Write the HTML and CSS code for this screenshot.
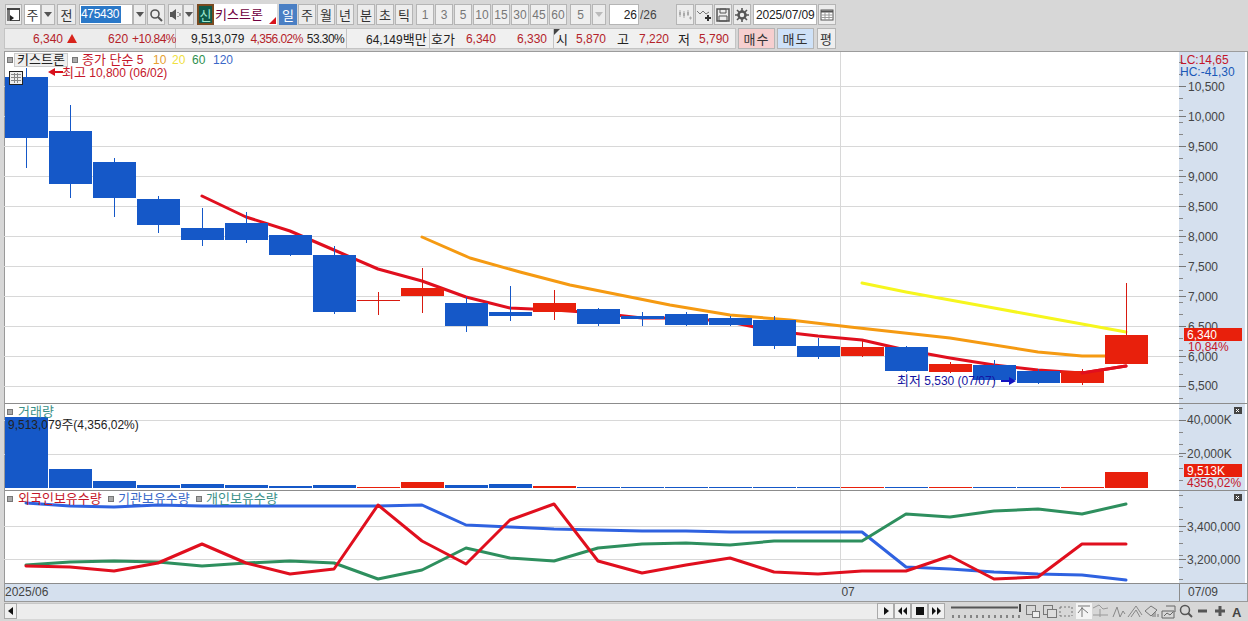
FILE: index.html
```html
<!DOCTYPE html>
<html lang="ko">
<head>
<meta charset="utf-8">
<title>키스트론 차트</title>
<link rel="stylesheet" href="styles.css">
</head>
<body>
<div class="toolbar">
  <button class="btn w17"><svg width="15" height="15" viewBox="0 0 15 15"><rect x="1.500" y="1.500" width="12" height="12" fill="#fff" stroke="#444"/><rect x="1" y="1" width="13" height="2" fill="#444"/><rect x="1" y="3" width="3" height="11" fill="#777"/><path d="M4 8l4 3-4 3z" fill="#222"/></svg></button>
  <button class="btn w17 m2 white">주</button>
  <button class="btn w14 caret"><i></i></button>
  <button class="btn w19 m2">전</button>
  <div class="field w54 m3"><span class="sel">475430</span></div>
  <button class="btn w13 caret"><i></i></button>
  <button class="btn w18 m1"><svg width="14" height="14" viewBox="0 0 14 14"><circle cx="6" cy="6" r="4" fill="none" stroke="#555" stroke-width="1.600"/><path d="M9 9l4 4" stroke="#555" stroke-width="2"/></svg></button>
  <button class="btn w15 m3"><svg width="13" height="13" viewBox="0 0 13 13"><path d="M1 4h2l4-3v11l-4-3H1z" fill="#555"/><path d="M9 4v1M9 8v1M11 5v3" stroke="#555"/></svg></button>
  <button class="btn w11 caret"><i></i></button>
  <div class="sin m3">신</div>
  <div class="name w63">키스트론<b></b></div>
  <button class="btn w18 m2 on">일</button>
  <button class="btn w18 m1">주</button>
  <button class="btn w18 m1">월</button>
  <button class="btn w18 m1">년</button>
  <button class="btn w18 m3">분</button>
  <button class="btn w18 m1">초</button>
  <button class="btn w18 m1">틱</button>
  <button class="btn w18 m3 dim">1</button>
  <button class="btn w18 m1 dim">3</button>
  <button class="btn w18 m1 dim">5</button>
  <button class="btn w18 m1 dim">10</button>
  <button class="btn w18 m1 dim">15</button>
  <button class="btn w18 m1 dim">30</button>
  <button class="btn w18 m1 dim">45</button>
  <button class="btn w18 m1 dim">60</button>
  <button class="btn w21 m3 dim">5</button>
  <button class="btn w14 m1 caret faded"><i></i></button>
  <div class="field w30 m3 right">26</div>
  <div class="plain w20">/26</div>
  <button class="btn w18 m16"><svg width="16" height="14" viewBox="0 0 16 14"><path d="M3 2v7M7 3v7M11 2v6" stroke="#aaa"/><path d="M2 4h2v3H2zM6 5h2v3H6zM10 4h2v3h-2z" fill="#aaa"/><path d="M12 10h3M13.500 8.500v3" stroke="#aaa"/></svg></button>
  <button class="btn w18 m1"><svg width="16" height="14" viewBox="0 0 16 14"><path d="M1 3l3 3 3-3 3 3 3-2" fill="none" stroke="#777"/><path d="M9 10h6M12 7v6" stroke="#333" stroke-width="2"/></svg></button>
  <button class="btn w18 m1"><svg width="14" height="14" viewBox="0 0 14 14"><path d="M1 1h12v12H1z" fill="none" stroke="#555" stroke-width="1.500"/><path d="M4 1h6v4H4zM3 8h8v5H3z" fill="none" stroke="#555"/></svg></button>
  <button class="btn w18 m1"><svg width="14" height="14" viewBox="0 0 14 14"><circle cx="7" cy="7" r="3.500" fill="none" stroke="#555" stroke-width="2.500"/><path d="M7 0v3M7 11v3M0 7h3M11 7h3M2 2l2 2M10 10l2 2M12 2l-2 2M4 10l-2 2" stroke="#555" stroke-width="1.600"/></svg></button>
  <div class="field w64 m2 date">2025/07/09</div>
  <button class="btn w18 m1"><svg width="14" height="12" viewBox="0 0 14 12"><rect x="1" y="1" width="12" height="10" fill="#fff" stroke="#555"/><path d="M1 2.500h12" stroke="#555" stroke-width="2"/><path d="M1 6h12M1 8.500h12M5 3v8M9 3v8" stroke="#999"/></svg></button>
</div>

<div class="quote">
  <div class="cell q1">
    <span class="red x29">6,340</span><b class="up"></b><span class="red x31">620</span><span class="red x4 pct">+10.84%</span>
  </div>
  <div class="cell q2">
    <span class="dark x15">9,513,079</span><span class="red x6 pct">4,356.02%</span><span class="dark x4 pct">53.30%</span>
  </div>
  <div class="cell q3"><span class="dark x19">64,149<span class="kr">백만</span></span></div>
  <div class="cell q4">
    <span class="dark x1 kr">호가</span><span class="red x11">6,340</span><span class="red x21">6,330</span>
  </div>
  <div class="cell q5">
    <b class="flag"></b><span class="dark x2 kr">시</span><span class="red x8">5,870</span><span class="dark x11 kr">고</span><span class="red x10">7,220</span><span class="dark x9 kr">저</span><span class="red x9">5,790</span>
  </div>
  <button class="trade buy">매수</button>
  <button class="trade sell">매도</button>
  <button class="trade even">평</button>
</div>

<div class="chart">
  <div class="pane main">
    <svg class="plot" width="1175" height="351" viewBox="4 52 1175 351">
      <path class="grid" d="M4 86.500H1179M4 116.500H1179M4 146.500H1179M4 176.500H1179M4 206.500H1179M4 236.500H1179M4 266.500H1179M4 296.500H1179M4 326.500H1179M4 356.500H1179M4 386.500H1179M840.500 52V403"/>
      <polyline class="ln ma5" points="202,196 246,217 290,231 334,250 378,269 422,281 466,297 510,308 554,310 598,313 642,318 686,318 730,322 774,331 818,336 862,340 906,350 950,358 994,365 1038,370 1082,373 1126,366"/>
      <polyline class="ln ma20" points="422,237 470,258 520,272 570,285 620,295 670,305 730,315 790,320 850,327 950,338 1038,352 1082,356 1126,356"/>
      <polyline class="ln ma60" points="862,283 906,292 950,300 994,308 1038,316 1082,324 1126,332"/>
      <g class="wick-b">
        <path d="M26.500 68V168M70.500 105V198M114.500 158V217M158.500 196V233M202.500 208V246M246.500 212V243M290.500 235V256M334.500 246V314M466.500 297V332M510.500 286V321M598.500 308V326M642.500 312V326M686.500 312V326M730.500 316V326M774.500 316V349M818.500 338V359M906.500 346V372M994.500 360V381M1038.500 369V384"/>
      </g>
      <g class="wick-r">
        <path d="M378.500 292V315M422.500 268V313M554.500 290V320M862.500 340V357M950.500 362V373M1082.500 369V385M1126.500 283V364"/>
        <path d="M357 300.500H400"/>
      </g>
      <g class="bar-b">
        <rect x="5" y="77" width="43" height="61"/><rect x="49" y="131" width="43" height="53"/><rect x="93" y="162" width="43" height="36"/><rect x="137" y="199" width="43" height="26"/><rect x="181" y="228" width="43" height="12"/><rect x="225" y="223" width="43" height="17"/><rect x="269" y="235" width="43" height="20"/><rect x="313" y="255" width="43" height="57"/><rect x="445" y="303" width="43" height="23"/><rect x="489" y="312" width="43" height="4"/><rect x="577" y="309" width="43" height="15"/><rect x="621" y="316" width="43" height="3"/><rect x="665" y="314" width="43" height="11"/><rect x="709" y="318" width="43" height="7"/><rect x="753" y="320" width="43" height="26"/><rect x="797" y="346" width="43" height="11"/><rect x="885" y="347" width="43" height="24"/><rect x="973" y="365" width="43" height="15"/><rect x="1017" y="371" width="43" height="12"/>
      </g>
      <g class="bar-r">
        <rect x="401" y="288" width="43" height="8"/><rect x="533" y="303" width="43" height="9"/><rect x="841" y="347" width="43" height="9"/><rect x="929" y="364" width="43" height="8"/><rect x="1061" y="371" width="43" height="12"/><rect x="1105" y="335" width="43" height="29"/>
      </g>
      <polyline class="ln ma5" points="1082,373 1126,366"/>
      <rect class="mark" x="7.500" y="57.500" width="5" height="5"/>
      <rect class="namebox" x="14.500" y="53.500" width="53" height="13"/>
      <text class="t k ink" x="17" y="64">키스트론</text>
      <rect class="mark" x="72.500" y="57.500" width="5" height="5"/>
      <text class="t red-t" x="82" y="64"><tspan class="k">종가 단순</tspan> 5</text>
      <text class="t orange-t" x="153" y="64">10</text>
      <text class="t yellow-t" x="172" y="64">20</text>
      <text class="t green-t" x="192" y="64">60</text>
      <text class="t blue-t" x="213" y="64">120</text>
      <path class="red-f" d="M48 72l7-4v3h8v2h-8v3z"/>
      <text class="t red-t" x="62" y="77"><tspan class="k">최고</tspan> 10,800 (06/02)</text>
      <rect class="cal" x="9.500" y="71.500" width="13" height="13"/>
      <path class="calg" d="M11 74.500h10M11 77.500h10M11 80.500h10M14.500 73v10M17.500 73v10"/>
      <text class="t navy-t" x="897" y="385"><tspan class="k">최저</tspan> 5,530 (07/07)</text>
      <path class="navy-f" d="M1016 381l-7-4v3h-8v2h8v3z"/>
    </svg>
    <svg class="axis" width="66" height="351" viewBox="1179 52 66 351">
      <rect x="1179" y="52" width="66" height="351" class="axis-bg"/>
      <path class="minor" d="M1181 62V403"/>
      <path class="major" d="M1179 86.500h7M1179 116.500h7M1179 146.500h7M1179 176.500h7M1179 206.500h7M1179 236.500h7M1179 266.500h7M1179 296.500h7M1179 326.500h7M1179 356.500h7M1179 386.500h7"/>
      <text class="t ax" x="1188" y="91">10,500</text>
      <text class="t ax" x="1188" y="121">10,000</text>
      <text class="t ax" x="1188" y="151">9,500</text>
      <text class="t ax" x="1188" y="181">9,000</text>
      <text class="t ax" x="1188" y="211">8,500</text>
      <text class="t ax" x="1188" y="241">8,000</text>
      <text class="t ax" x="1188" y="271">7,500</text>
      <text class="t ax" x="1188" y="301">7,000</text>
      <text class="t ax" x="1188" y="331">6,500</text>
      <text class="t ax" x="1188" y="361">6,000</text>
      <text class="t ax" x="1188" y="390">5,500</text>
      <text class="t red-t" x="1180" y="64">LC:14,65</text>
      <text class="t blue-d" x="1180" y="76">HC:-41,30</text>
      <rect class="bar-r" x="1184" y="328" width="58" height="13"/>
      <text class="t wh" x="1187" y="339">6,340</text>
      <text class="t red-t" x="1188" y="351">10,84%</text>
    </svg>
  </div>

  <div class="pane vol">
    <svg class="plot" width="1175" height="86" viewBox="4 404 1175 86">
      <path class="grid" d="M4 420.500H1179M4 454.500H1179M840.500 404V490"/>
      <g class="bar-b">
        <rect x="5" y="417" width="43" height="71"/><rect x="49" y="469" width="43" height="19"/><rect x="93" y="481" width="43" height="7"/><rect x="137" y="485" width="43" height="3"/><rect x="181" y="484" width="43" height="4"/><rect x="225" y="485" width="43" height="3"/><rect x="269" y="486" width="43" height="2"/><rect x="313" y="485" width="43" height="3"/><rect x="445" y="485" width="43" height="3"/><rect x="489" y="484" width="43" height="4"/><rect x="577" y="487" width="43" height="1"/><rect x="621" y="487" width="43" height="1"/><rect x="665" y="487" width="43" height="1"/><rect x="709" y="487" width="43" height="1"/><rect x="753" y="487" width="43" height="1"/><rect x="797" y="487" width="43" height="1"/><rect x="885" y="487" width="43" height="1"/><rect x="973" y="487" width="43" height="1"/><rect x="1017" y="487" width="43" height="1"/>
      </g>
      <g class="bar-r">
        <rect x="357" y="487" width="43" height="1"/><rect x="401" y="482" width="43" height="6"/><rect x="533" y="486" width="43" height="2"/><rect x="841" y="487" width="43" height="1"/><rect x="929" y="487" width="43" height="1"/><rect x="1061" y="487" width="43" height="1"/><rect x="1105" y="472" width="43" height="16"/>
      </g>
      <rect class="mark" x="7.500" y="409.500" width="5" height="5"/>
      <text class="t k teal-t" x="18" y="416">거래량</text>
      <text class="t ink" x="8" y="429">9,513,079<tspan class="k">주</tspan>(4,356,02%)</text>
    </svg>
    <svg class="axis" width="66" height="86" viewBox="1179 404 66 86">
      <rect x="1179" y="404" width="66" height="86" class="axis-bg"/>
      <path class="minor" d="M1181 408V490"/>
      <path class="major" d="M1179 420.500h7M1179 453.500h7"/>
      <text class="t ax" x="1187" y="424">40,000K</text>
      <text class="t ax" x="1187" y="458">20,000K</text>
      <rect class="closebox" x="1234" y="407" width="8" height="7"/>
      <path class="closex" d="M1236 409l3 3M1239 409l-3 3"/>
      <rect class="bar-r" x="1184" y="464" width="58" height="13"/>
      <text class="t wh" x="1187" y="475">9,513K</text>
      <text class="t red-t" x="1187" y="487">4356,02%</text>
    </svg>
  </div>

  <div class="pane lines">
    <svg class="plot" width="1175" height="92" viewBox="4 491 1175 92">
      <path class="grid" d="M4 526.500H1179M4 559.500H1179M840.500 491V583"/>
      <polyline class="ln inst" points="26,503 70,506 114,507 158,505 202,506 290,506 378,506 422,505 466,525 510,527 554,529 598,530 642,531 686,531 730,532 774,532 818,532 862,532 906,567 950,569 994,572 1038,574 1082,575 1126,580"/>
      <polyline class="ln retail" points="26,565 70,562 114,561 158,562 202,566 246,563 290,561 334,563 378,579 422,570 466,548 510,558 554,561 598,548 642,544 686,543 730,545 774,541 818,541 862,541 906,514 950,517 994,511 1038,509 1082,514 1126,504"/>
      <polyline class="ln foreign" points="26,566 70,567 114,571 158,563 202,544 246,563 290,574 334,569 378,505 422,541 466,564 510,520 554,504 598,561 642,573 686,565 730,558 774,572 818,574 862,571 906,571 950,556 994,579 1038,577 1082,544 1126,544"/>
      <rect class="mark" x="7.500" y="496.500" width="5" height="5"/>
      <text class="t k red-t" x="18" y="503">외국인보유수량</text>
      <rect class="mark" x="108.500" y="496.500" width="5" height="5"/>
      <text class="t k blue-t" x="118" y="503">기관보유수량</text>
      <rect class="mark" x="196.500" y="496.500" width="5" height="5"/>
      <text class="t k teal-t" x="206" y="503">개인보유수량</text>
    </svg>
    <svg class="axis" width="66" height="92" viewBox="1179 491 66 92">
      <rect x="1179" y="491" width="66" height="92" class="axis-bg"/>
      <path class="minor" d="M1181 495V583"/>
      <path class="major" d="M1179 526.500h7M1179 559.500h7"/>
      <text class="t ax" x="1187" y="531">3,400,000</text>
      <text class="t ax" x="1187" y="564">3,200,000</text>
      <rect class="closebox" x="1234" y="494" width="8" height="7"/>
      <path class="closex" d="M1236 496l3 3M1239 496l-3 3"/>
    </svg>
  </div>

  <div class="timeline">
    <div class="ticks"><span>2025/06</span><span class="july">07</span></div>
    <div class="last">07/09</div>
  </div>
</div>

<div class="scroller">
  <button class="sbtn w13"><svg width="6" height="8" viewBox="0 0 6 8"><path d="M5 0v8L0 4z" fill="#111"/></svg></button>
  <div class="track"></div>
  <button class="sbtn w17"><svg width="6" height="8" viewBox="0 0 6 8"><path d="M1 0v8l5-4z" fill="#111"/></svg></button>
  <button class="sbtn w17"><svg width="9" height="8" viewBox="0 0 9 8"><path d="M4 0v8L0 4zM9 0v8L5 4z" fill="#111"/></svg></button>
  <button class="sbtn w17"><svg width="8" height="8" viewBox="0 0 8 8"><path d="M0 0h8v8H0z" fill="#111"/></svg></button>
  <button class="sbtn w17"><svg width="9" height="8" viewBox="0 0 9 8"><path d="M0 0v8l4-4zM5 0v8l4-4z" fill="#111"/></svg></button>
  <svg class="slider" width="72" height="16" viewBox="0 0 72 16"><path d="M1 4.500H68" stroke="#555" stroke-width="2"/><path d="M70 1v8" stroke="#444" stroke-width="2"/><path d="M3 12v3M9 12v3M15 12v3M21 12v3M27 12v3M33 12v3M39 12v3M45 12v3M51 12v3M57 12v3M63 12v3M69 12v3" stroke="#333"/></svg>
  <svg class="tools" width="218" height="16" viewBox="0 0 218 16">
    <g fill="none" stroke="#777"><rect x="1.500" y="2.500" width="9" height="9"/><rect x="7.500" y="8.500" width="7" height="6" fill="#eee"/><rect x="18.500" y="2.500" width="9" height="9"/><rect x="22.500" y="6.500" width="9" height="8" fill="#ddd"/><path d="M35 4h12M35 13h12M35 4v9M47 4v9" stroke-dasharray="2 2"/></g>
    <rect x="51" y="0" width="16" height="16" fill="#f4f4f4"/>
    <path d="M53 3h12M57 4v10M57 5l-4 5M57 5l6 5" fill="none" stroke="#777"/>
    <path d="M68 5l6-3 4 4 5-1M68 12h15M75 6v8" fill="none" stroke="#999"/>
    <path d="M88 14l4-10 3 10 3-6 2 3" fill="none" stroke="#888"/>
    <path d="M103 14l8-11 6 9M106 14l5-7 4 7" fill="none" stroke="#888"/>
    <path d="M120 8l6-5 6 4-6 6zM128 14v-3M130 14v-5M133 14v-3" fill="none" stroke="#777"/>
    <path d="M137 8h12v7h-12zM141 3h9v6M139 13l3-3 3 2 3-3" fill="none" stroke="#666"/>
    <circle cx="160" cy="7" r="4.500" fill="none" stroke="#555" stroke-width="1.500"/><path d="M163 10l4 4" stroke="#555" stroke-width="2"/>
    <path d="M173 8h9" stroke="#555" stroke-width="3"/>
    <path d="M190 8h10M195 3v10" stroke="#555" stroke-width="3"/>
    <text x="207" y="14" class="a-tool">A</text>
  </svg>
</div>
</body>
</html>
```

FILE: styles.css
```css
html, body { margin: 0; padding: 0; }
body {
  width: 1248px; height: 621px; overflow: hidden;
  background: #d7d7d7;
  font: 12px "Liberation Sans", "Noto Sans CJK KR", sans-serif;
  color: #333;
}
button { font: inherit; color: inherit; padding: 0; margin: 0; }

.toolbar { display: flex; height: 21px; margin-top: 4px; padding-left: 5px; align-items: stretch; font-size: 13px; }
.btn {
  display: flex; align-items: center; justify-content: center;
  background: #ececec; border: 1px solid #b5b5b5; box-sizing: border-box; overflow: hidden; color: #333;
}
.white { background: #fff; }
.dim { color: #777; background: #efefef; font-size: 12px; }
.on { background: #4a7fc4; color: #fff; border-color: #4a7fc4; }
.caret i { display: block; width: 0; height: 0; border: 4px solid transparent; border-top: 5px solid #555; border-bottom: 0; }
.faded i { border-top-color: #bbb; }
.w11 { width: 11px; } .w13 { width: 13px; } .w14 { width: 14px; } .w15 { width: 15px; }
.w17 { width: 17px; } .w18 { width: 18px; } .w19 { width: 19px; } .w20 { width: 20px; }
.w21 { width: 21px; } .w30 { width: 30px; } .w54 { width: 54px; } .w63 { width: 63px; } .w64 { width: 64px; }
.m1 { margin-left: 1px; } .m2 { margin-left: 2px; } .m3 { margin-left: 3px; } .m16 { margin-left: 16px; }

.field { background: #fff; border: 1px solid #b5b5b5; box-sizing: border-box; display: flex; align-items: center; padding-left: 1px; color: #222; font-size: 12px; }
.right { justify-content: flex-end; padding: 0 1px 0 0; }
.date { padding-left: 2px; letter-spacing: -.15px; }
.sel { background: #2a78c8; color: #fff; padding: 0 2px 0 0; line-height: 17px; width: 38px; letter-spacing: -.3px; }
.plain { display: flex; align-items: center; padding-left: 1px; color: #444; font-size: 12px; }
.sin { width: 17px; box-sizing: border-box; background: #0f5a4a; color: #9fe8d0; border: 2px solid #7a4a20; display: flex; align-items: center; justify-content: center; }
.name { box-sizing: border-box; background: #fff; color: #700040; display: flex; align-items: center; padding-left: 1px; padding-bottom: 2px; position: relative; }
.name b { position: absolute; right: 1px; bottom: 1px; width: 0; height: 0; border-left: 7px solid transparent; border-bottom: 7px solid #d8141c; }

.quote { display: flex; height: 21px; margin-top: 3px; margin-left: 4px; align-items: stretch; }
.cell { display: flex; align-items: center; box-sizing: border-box; background: #f0f0f0; border: 1px solid #c4c4c4; border-left: 0; position: relative; white-space: nowrap; }
.q1 { width: 172px; border-left: 1px solid #c4c4c4; background: #ececec; }
.q2 { width: 171px; }
.q3 { width: 83px; }
.q4 { width: 124px; }
.q5 { width: 182px; }
.red { color: #b4232a; } .dark { color: #222; }
.kr { font-size: 13px; }
.pct { letter-spacing: -.55px; }
.x1 { margin-left: 1px; } .x2 { margin-left: 2px; } .x4 { margin-left: 4px; } .x6 { margin-left: 6px; }
.x8 { margin-left: 8px; } .x9 { margin-left: 9px; } .x10 { margin-left: 10px; } .x11 { margin-left: 11px; }
.x15 { margin-left: 15px; } .x19 { margin-left: 19px; } .x21 { margin-left: 21px; } .x29 { margin-left: 28px; } .x31 { margin-left: 31px; }
.up { margin-left: 4px; width: 0; height: 0; border-left: 5px solid transparent; border-right: 5px solid transparent; border-bottom: 9px solid #d8241c; }
.flag { position: absolute; left: 0; top: 0; width: 0; height: 0; border-top: 6px solid #444; border-right: 6px solid transparent; }
.trade { box-sizing: border-box; border: 1px solid #b5b5b5; color: #333; display: flex; align-items: center; justify-content: center; letter-spacing: 1px; font-size: 13px; }
.buy { width: 37px; margin-left: 2px; background: #f6cfcf; }
.sell { width: 37px; margin-left: 2px; background: #cfe2f8; }
.even { width: 19px; margin-left: 3px; background: #eee; }

.chart { margin-top: 2px; margin-left: 4px; width: 1242px; border-top: 1px solid #9c9c9c; background: #fff; border-left: 1px solid #999; border-right: 1px solid #999; box-sizing: content-box; }
.pane { display: flex; border-bottom: 1px solid #8c8c8c; }
.plot, .axis { display: block; flex: none; }
.plot { margin-left: -1px; }
.axis-bg { fill: #d5e0ee; }
.grid { stroke: #d8d8d8; fill: none; }
.wick-b path { stroke: #1558c8; fill: none; }
.wick-r path { stroke: #d81a10; fill: none; }
.bar-b { fill: #1558c8; }
.bar-r { fill: #e8200c; }
.ln { fill: none; stroke-width: 3; stroke-linejoin: round; stroke-linecap: round; }
.ma5 { stroke: #e00f1e; }
.ma20 { stroke: #f59a12; }
.ma60 { stroke: #f6f61e; }
.inst { stroke: #2f62e0; }
.retail { stroke: #2e8f5e; }
.foreign { stroke: #e00f1e; }
.mark { fill: #aaa; stroke: #777; }
.namebox { fill: #efefef; stroke: #ccc; }
.cal { fill: #eee; stroke: #222; }
.calg { stroke: #888; fill: none; }
.t { font: 12px "Liberation Sans", "Noto Sans CJK KR", sans-serif; }
.k { font-size: 13px; }
.ink { fill: #222; }
.red-t { fill: #c4162a; }
.orange-t { fill: #e6a030; }
.yellow-t { fill: #f0e040; }
.green-t { fill: #2e8f4e; }
.blue-t { fill: #3a68c8; }
.blue-d { fill: #1a58b8; }
.navy-t { fill: #1414a0; }
.teal-t { fill: #3a9088; }
.red-f { fill: #d8101c; }
.navy-f { fill: #1414c0; }
.ax { fill: #444; }
.wh { fill: #fff; }
.minor { stroke: #888; stroke-width: 4; stroke-dasharray: 1 11; fill: none; }
.major { stroke: #777; fill: none; }
.closebox { fill: #444; }
.closex { stroke: #fff; fill: none; }

.timeline { display: flex; height: 17px; background: #d5e0ee; line-height: 16px; color: #444; border-bottom: 1px solid #999; }
.ticks { width: 1174px; position: relative; border-right: 1px solid #8c8c8c; display: flex; }
.ticks .july { margin-left: 793px; }
.last { padding-left: 8px; }

.scroller { display: flex; align-items: center; height: 17px; margin-left: 4px; }
.sbtn { height: 16px; box-sizing: border-box; background: #f0f0f0; border: 1px solid #aaa; display: flex; align-items: center; justify-content: center; }
.track { width: 860px; height: 16px; background: #ededed; border-top: 1px solid #c8c8c8; box-sizing: border-box; }
.slider { margin-left: 5px; flex: none; }
.tools { margin-left: 3px; flex: none; overflow: hidden; }
.a-tool { font: bold 13px "Liberation Sans", sans-serif; fill: #444; }
```
